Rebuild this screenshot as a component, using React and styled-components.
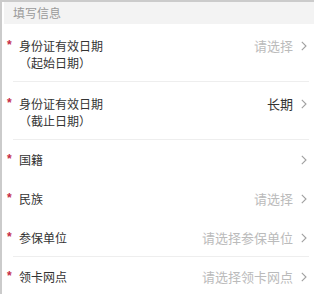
import React from 'react';
import styled, { createGlobalStyle } from 'styled-components';

const GlobalStyle = createGlobalStyle`
  html, body {
    margin: 0;
    padding: 0;
    background: #fff;
    font-family: "Noto Sans CJK SC", "Liberation Sans", sans-serif;
  }
`;

const fields = [
  { label: '身份证有效日期', sub: '（起始日期）', placeholder: '请选择', line: true },
  { label: '身份证有效日期', sub: '（截止日期）', value: '长期', line: true },
  { label: '国籍' },
  { label: '民族', placeholder: '请选择' },
  { label: '参保单位', placeholder: '请选择参保单位', line: true },
  { label: '领卡网点', placeholder: '请选择领卡网点' },
];

const Page = () => {
  return (
    <Frame>
      <Panel>
        <SectionTitle>填写信息</SectionTitle>
        {fields.map((f, i) => (
          <Row key={i} $tall={!!f.sub} $line={f.line}>
            <Star>*</Star>
            <Label>
              <div>{f.label}</div>
              {f.sub && <div>{f.sub}</div>}
            </Label>
            <Value $filled={!!f.value}>{f.value || f.placeholder}</Value>
            <Chevron viewBox="0 0 6 10" $tall={!!f.sub}>
              <path d="M0.8 0.8 L5 5 L0.8 9.2" />
            </Chevron>
          </Row>
        ))}
      </Panel>
    </Frame>
  );
};

export default function App() {
  return (
    <>
      <GlobalStyle />
      <Page />
    </>
  );
}

const Frame = styled.div`
  width: 314px;
  height: 294px;
  border-left: 2px solid #cbcbcb;
  border-top: 2px solid #cbcbcb;
  padding-left: 2px;
  box-sizing: border-box;
  overflow: hidden;
`;

const Panel = styled.div`
  width: 312px;
  border-right: 1px solid #e6e6e6;
  box-sizing: border-box;
`;

const SectionTitle = styled.div`
  height: 22px;
  line-height: 22px;
  background: #f3f3f3;
  color: #9a9a9a;
  font-size: 12px;
  padding-left: 9px;
`;

const Row = styled.div`
  position: relative;
  display: flex;
  align-items: ${p => (p.$tall ? 'flex-start' : 'center')};
  height: ${p => (p.$tall ? '58px' : '39px')};
  padding: ${p => (p.$tall ? '13px 0 0 3px' : '0 0 0 3px')};
  box-sizing: border-box;
  &::after {
    content: '';
    display: ${p => (p.$line ? 'block' : 'none')};
    position: absolute;
    left: 9px;
    right: 6px;
    bottom: 0;
    height: 1px;
    background: #eeeeee;
  }
`;

const Star = styled.span`
  width: 12px;
  color: #c42a47;
  font-size: 12px;
  line-height: 17px;
  font-family: "Liberation Sans", sans-serif;
  font-weight: bold;
`;

const Label = styled.div`
  flex: 1;
  color: #333;
  font-size: 12px;
  line-height: 17px;
`;

const Value = styled.div`
  color: ${p => (p.$filled ? '#333' : '#bbbbbb')};
  font-size: 13px;
  line-height: 17px;
  margin-right: 8px;
`;

const Chevron = styled.svg`
  width: 6px;
  height: 10px;
  margin-top: ${p => (p.$tall ? '4px' : '0')};
  margin-right: 8px;
  flex-shrink: 0;
  fill: none;
  stroke: #a0a0a0;
  stroke-width: 1.1;
`;
